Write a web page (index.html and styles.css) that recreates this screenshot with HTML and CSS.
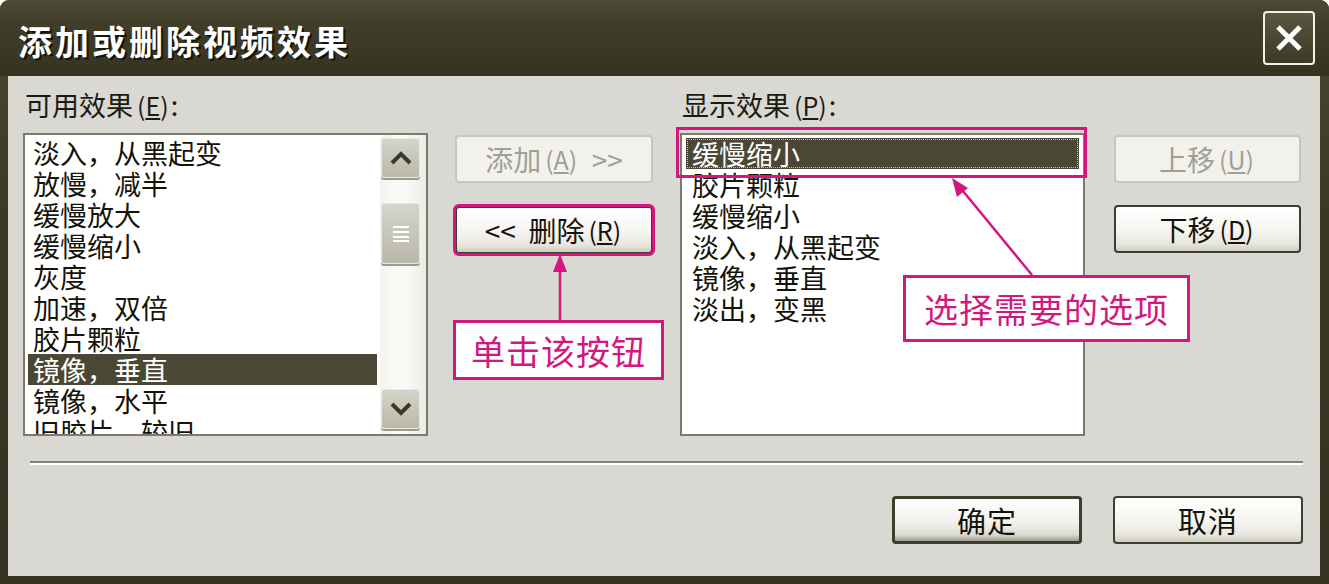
FILE: index.html
```html
<!DOCTYPE html>
<html lang="zh-CN">
<head>
    <meta charset="UTF-8">
    <title>添加或删除视频效果</title>
    <link rel="stylesheet" href="styles.css">
</head>
<body>
    <div class="window">
        <!-- タイトルバー -->
        <div class="titlebar">
            <h1 class="title">添加或删除视频效果</h1>
            <button class="close-btn" aria-label="关闭">
                <svg width="30" height="30" viewBox="0 0 30 30">
                    <path d="M4 4 L26 26 M26 4 L4 26" stroke="#fff" stroke-width="5" fill="none"/>
                </svg>
            </button>
        </div>

        <div class="client">
            <div class="panes">
                <div class="label">可用效果<span class="key">(<u>E</u>)</span>:</div>
                <div></div>
                <div class="label">显示效果<span class="key">(<u>P</u>)</span>:</div>
                <div></div>

                <div class="listbox">
                    <ul class="items">
                        <li>淡入，从黑起变</li>
                        <li>放慢，减半</li>
                        <li>缓慢放大</li>
                        <li>缓慢缩小</li>
                        <li>灰度</li>
                        <li>加速，双倍</li>
                        <li>胶片颗粒</li>
                        <li class="selected">镜像，垂直</li>
                        <li>镜像，水平</li>
                        <li>旧胶片，较旧</li>
                    </ul>
                    <div class="scrollbar">
                        <div class="sb-btn">
                            <svg width="24" height="16" viewBox="0 0 24 16"><path d="M3 13 L12 4 L21 13" stroke="#3b3a2a" stroke-width="4" fill="none"/></svg>
                        </div>
                        <div class="sb-thumb">
                            <svg width="18" height="18" viewBox="0 0 18 18"><path d="M1 2 H17 M1 7 H17 M1 12 H17 M1 16 H17" stroke="#fff" stroke-width="2"/></svg>
                        </div>
                        <div class="sb-track"></div>
                        <div class="sb-btn">
                            <svg width="24" height="16" viewBox="0 0 24 16"><path d="M3 3 L12 12 L21 3" stroke="#3b3a2a" stroke-width="4" fill="none"/></svg>
                        </div>
                    </div>
                </div>

                <div class="middle-buttons">
                    <button class="btn" disabled>添加<span class="key">(<u>A</u>)</span>&nbsp;&nbsp;&gt;&gt;</button>
                    <button class="btn marked">&lt;&lt;&nbsp;&nbsp;删除<span class="key">(<u>R</u>)</span></button>
                </div>

                <div class="listbox right-list">
                    <ul class="items">
                        <li class="selected focused">缓慢缩小</li>
                        <li>胶片颗粒</li>
                        <li>缓慢缩小</li>
                        <li>淡入，从黑起变</li>
                        <li>镜像，垂直</li>
                        <li>淡出，变黑</li>
                    </ul>
                    <div class="mark-box"></div>
                </div>

                <div class="side-buttons">
                    <button class="btn" disabled>上移<span class="key">(<u>U</u>)</span></button>
                    <button class="btn">下移<span class="key">(<u>D</u>)</span></button>
                </div>
            </div>

            <hr class="separator">

            <div class="footer">
                <button class="btn default">确定</button>
                <button class="btn">取消</button>
            </div>

            <!-- 注釈 -->
            <svg class="arrows" width="1312" height="500" viewBox="0 0 1312 500">
                <path d="M552 244 V186" stroke="#d3177f" stroke-width="2.5" fill="none"/>
                <path d="M552 178 L545 196 L559 196 Z" fill="#d3177f"/>
                <path d="M1024 199 L950 109" stroke="#d3177f" stroke-width="2.5" fill="none"/>
                <path d="M944 102 L949 121 L960 112 Z" fill="#d3177f"/>
            </svg>
            <div class="callout callout-left">单击该按钮</div>
            <div class="callout callout-right">选择需要的选项</div>
        </div>
    </div>
</body>
</html>
```

FILE: styles.css
```css
:root {
    --frame-color: #3c3925;
    --client-color: #d9d8d3;
    --select-color: #4a4735;
    --mark-color: #d3177f;
    --text-color: #1c1b12;
}

* {
    box-sizing: border-box;
}

html, body {
    margin: 0;
    padding: 0;
    background-color: #ffffff;
}

body {
    width: 1329px;
    height: 584px;
    overflow: hidden;
    font-family: 'Noto Sans CJK SC', 'Noto Sans', sans-serif;
    color: var(--text-color);
}

.window {
    width: 1329px;
    height: 584px;
    background: linear-gradient(180deg, #4a4732 0%, #3a3723 40%, #35321f 100%);
    border-radius: 9px 9px 0 0;
    display: flex;
    flex-direction: column;
}

.titlebar {
    height: 76px;
    display: flex;
    align-items: center;
    justify-content: space-between;
    padding: 4px 14px 0 18px;
    background: linear-gradient(180deg, #4d4a36 0%, #403d29 30%, #3b3826 70%, #34311f 100%);
    border-radius: 9px 9px 0 0;
}

.title {
    margin: 0;
    font-size: 34px;
    font-weight: 700;
    letter-spacing: 3px;
    color: #ffffff;
    text-shadow: 2px 2px 0 #151409;
}

.close-btn {
    width: 52px;
    height: 54px;
    margin-top: -4px;
    border: 2px solid #f4f1e2;
    border-radius: 4px;
    background: linear-gradient(180deg, #5a5742 0%, #47442f 60%, #3d3a27 100%);
    display: flex;
    align-items: center;
    justify-content: center;
    padding: 0;
}

.client {
    position: relative;
    flex: 1;
    margin: 0 9px 8px 8px;
    background-color: var(--client-color);
    padding: 12px 17px 0 15px;
    display: flex;
    flex-direction: column;
}

.panes {
    display: grid;
    grid-template-columns: 405px 198px 405px 189px;
    grid-template-rows: 45px 303px;
    column-gap: 27px;
}

.label {
    font-size: 27px;
    line-height: 34px;
    padding-left: 2px;
    color: var(--text-color);
}

.key {
    font-size: 25px;
    margin: 0 2px 0 4px;
}

.listbox {
    position: relative;
    display: flex;
    background-color: #ffffff;
    border: 2px solid #7b7a6c;
}

.items {
    list-style: none;
    margin: 0;
    padding: 2px 3px;
    flex: 1;
    overflow: hidden;
}

.items li {
    font-size: 27px;
    line-height: 31px;
    height: 31px;
    padding-left: 5px;
    white-space: nowrap;
    color: #141309;
}

.items li.selected {
    background-color: var(--select-color);
    color: #ffffff;
}

.items li.focused {
    outline: 1px dotted #c9c6a8;
    outline-offset: -2px;
}

.right-list .items {
    padding: 3px 4px;
}

.right-list .items li {
    padding-left: 6px;
}

.scrollbar {
    width: 46px;
    display: flex;
    flex-direction: column;
    padding: 3px 6px 5px 1px;
    background: linear-gradient(90deg, #f3f3ef 0%, #fbfbf9 50%, #ecece6 100%);
}

.sb-btn,
.sb-thumb {
    border: 1px solid #e9e8e0;
    border-radius: 3px;
    background: linear-gradient(180deg, #d6d5cc 0%, #c4c3b6 60%, #b9b8aa 100%);
    box-shadow: 0 2px 0 #9c9b8c;
    display: flex;
    align-items: center;
    justify-content: center;
}

.sb-btn {
    height: 40px;
}

.sb-thumb {
    height: 61px;
    margin-top: 25px;
}

.sb-track {
    flex: 1;
}

.middle-buttons,
.side-buttons {
    display: flex;
    flex-direction: column;
    gap: 23px;
    padding-top: 2px;
}

.side-buttons {
    margin-left: 2px;
    gap: 22px;
}

.btn {
    height: 48px;
    font-family: 'Noto Sans CJK SC', 'Noto Sans', sans-serif;
    font-size: 28px;
    color: #141309;
    border: 2px solid #3f3d2e;
    border-radius: 4px;
    background: linear-gradient(180deg, #ffffff 0%, #f5f4f0 55%, #e6e5dd 85%, #cfcdc2 100%);
    padding: 0;
    display: flex;
    align-items: center;
    justify-content: center;
    white-space: nowrap;
}

.btn:disabled {
    color: #a09f93;
    border-color: #c8c7bb;
    background: #f2f1ec;
}

.btn.marked {
    outline: 3px solid var(--mark-color);
    outline-offset: -1px;
}

.btn.default {
    border-width: 3px;
    background: linear-gradient(180deg, #ffffff 0%, #f2f1ec 55%, #dcdbd2 85%, #9e9c8e 100%);
}

.footer .btn {
    width: 190px;
    font-size: 29px;
    letter-spacing: 1px;
}

.mark-box {
    position: absolute;
    top: -8px;
    left: -6px;
    width: 411px;
    height: 51px;
    border: 3px solid var(--mark-color);
}

.separator {
    margin: 25px 0 0 7px;
    height: 0;
    border: none;
    border-top: 2px solid #818071;
    border-bottom: 2px solid #ffffff;
}

.footer {
    display: flex;
    justify-content: flex-end;
    gap: 31px;
    margin-top: 31px;
}

.arrows {
    position: absolute;
    left: 0;
    top: 0;
    pointer-events: none;
}

.callout {
    position: absolute;
    background-color: #ffffff;
    border: 3px solid var(--mark-color);
    color: var(--mark-color);
    font-size: 34px;
    display: flex;
    align-items: center;
    justify-content: center;
    letter-spacing: 1px;
}

.callout-left {
    left: 445px;
    top: 244px;
    width: 211px;
    height: 60px;
}

.callout-right {
    left: 895px;
    top: 199px;
    width: 287px;
    height: 67px;
}
```
